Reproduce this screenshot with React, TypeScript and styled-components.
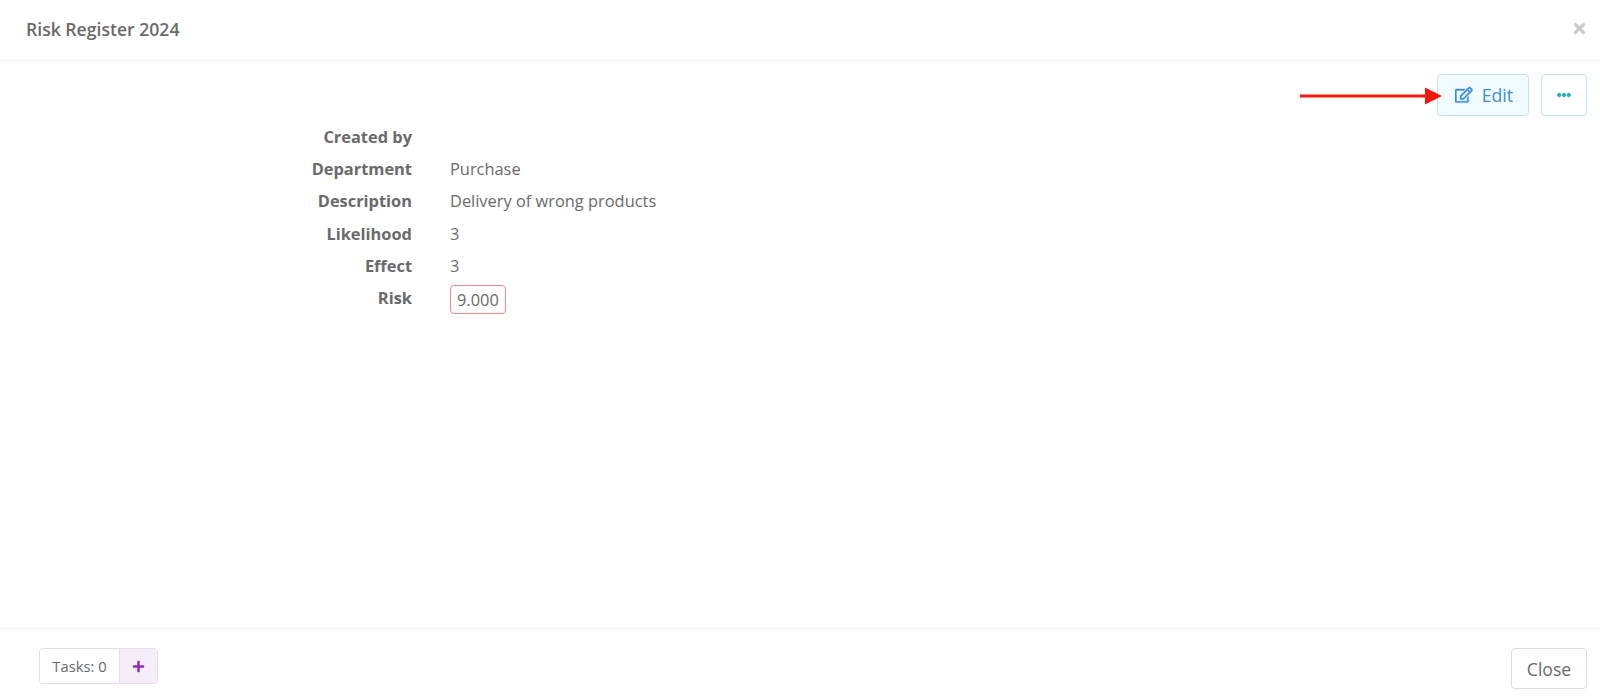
import { Fragment } from "react";
import styled, { createGlobalStyle } from "styled-components";
import { FaEllipsisH, FaPlus, FaRegEdit, FaTimes } from "react-icons/fa";

const GlobalStyle = createGlobalStyle`
  html, body {
    margin: 0;
    padding: 0;
    background: #fff;
  }
  body {
    font-family: "Open Sans", "Liberation Sans", sans-serif;
    color: #6a6a6a;
  }
`;

const Modal = styled.div`
  display: flex;
  flex-direction: column;
  width: 1600px;
  height: 698px;
  overflow: hidden;
`;

const Header = styled.header`
  display: flex;
  justify-content: space-between;
  align-items: center;
  height: 61px;
  box-sizing: border-box;
  padding: 0 12px 3px 26px;
  border-bottom: 1px solid #eeeeee;
`;

const Title = styled.h4`
  margin: 0;
  font-size: 17.6px;
  font-weight: 600;
  color: #6a6a6a;
`;

const Dismiss = styled.span`
  display: flex;
  font-size: 17px;
  color: #c9c9c9;
`;

const Content = styled.main`
  flex: 1;
  padding: 13px 13px 0 0;
`;

const Toolbar = styled.div`
  position: relative;
  display: flex;
  justify-content: flex-end;
  gap: 12px;
`;

const ActionButton = styled.button<{ $wide?: boolean }>`
  display: flex;
  align-items: center;
  justify-content: center;
  gap: 9px;
  width: ${(p) => (p.$wide ? "92px" : "46px")};
  height: 42px;
  padding: ${(p) => (p.$wide ? "0 0 0 2px" : "0")};
  border: 1px solid ${(p) => (p.$wide ? "#bfe3ee" : "#b8e4ea")};
  border-radius: 4px;
  background: ${(p) => (p.$wide ? "#f2fbff" : "#fff")};
  color: ${(p) => (p.$wide ? "#3a8fd6" : "#23a9b8")};
  font-family: inherit;
  font-size: 17.6px;

  svg path {
    stroke: currentColor;
    stroke-width: ${(p) => (p.$wide ? "14px" : "10px")};
  }
`;

const Arrow = styled.svg`
  position: absolute;
  left: 1300px;
  top: 12px;
`;

const Details = styled.dl`
  display: grid;
  grid-template-columns: 412px 1fr;
  grid-auto-rows: 32.3px;
  column-gap: 38px;
  align-items: center;
  margin: 4px 0 0;
  font-size: 16.4px;
`;

const Label = styled.dt`
  font-weight: 700;
  text-align: right;
`;

const Value = styled.dd`
  margin: 0;
`;

const RiskBadge = styled.span`
  display: block;
  width: fit-content;
  margin-top: 4px;
  padding: 3px 6px;
  border: 1px solid #f28a8a;
  border-radius: 4px;
  line-height: 21px;
`;

const Footer = styled.footer`
  display: flex;
  justify-content: space-between;
  align-items: flex-start;
  height: 70px;
  box-sizing: border-box;
  padding: 19px 13px 0 39px;
  border-top: 1px solid #eeeeee;
`;

const TaskGroup = styled.div`
  display: flex;
  height: 36px;
  box-sizing: border-box;
  border: 1px solid #e3dde6;
  border-radius: 4px;
  font-size: 14.8px;
  overflow: hidden;
`;

const TaskCount = styled.span`
  display: flex;
  align-items: center;
  justify-content: center;
  width: 79px;
  background: #fff;
`;

const TaskAdd = styled.span`
  display: flex;
  align-items: center;
  justify-content: center;
  width: 37px;
  border-left: 1px solid #e3dde6;
  background: #f5eef8;
  color: #8a2db0;
  font-size: 13px;
`;

const CloseButton = styled.button`
  width: 76px;
  height: 41px;
  padding: 0;
  border: 1px solid #dddddd;
  border-radius: 4px;
  background: #fff;
  color: #6a6a6a;
  font-family: inherit;
  font-size: 17.6px;
`;

const rows: [string, string][] = [
  ["Created by", ""],
  ["Department", "Purchase"],
  ["Description", "Delivery of wrong products"],
  ["Likelihood", "3"],
  ["Effect", "3"],
];

export default function App() {
  return (
    <Modal>
      <GlobalStyle />
      <Header>
        <Title>Risk Register 2024</Title>
        <Dismiss>
          <FaTimes />
        </Dismiss>
      </Header>
      <Content>
        <Toolbar>
          <Arrow width="143" height="20" viewBox="0 0 143 20">
            <rect x="0" y="8.5" width="128" height="3" fill="#f5160c" />
            <polygon points="125,1.5 142,10 125,18.5" fill="#f5160c" />
          </Arrow>
          <ActionButton $wide>
            <FaRegEdit />
            Edit
          </ActionButton>
          <ActionButton>
            <FaEllipsisH size={14} />
          </ActionButton>
        </Toolbar>
        <Details>
          {rows.map(([label, value]) => (
            <Fragment key={label}>
              <Label>{label}</Label>
              <Value>{value}</Value>
            </Fragment>
          ))}
          <Label>Risk</Label>
          <Value>
            <RiskBadge>9.000</RiskBadge>
          </Value>
        </Details>
      </Content>
      <Footer>
        <TaskGroup>
          <TaskCount>Tasks: 0</TaskCount>
          <TaskAdd>
            <FaPlus />
          </TaskAdd>
        </TaskGroup>
        <CloseButton>Close</CloseButton>
      </Footer>
    </Modal>
  );
}
